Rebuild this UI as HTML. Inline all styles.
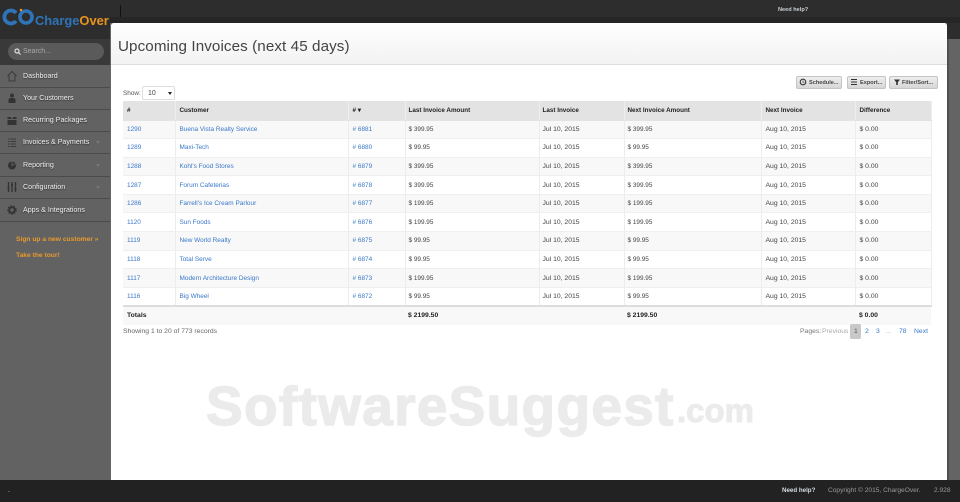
<!DOCTYPE html>
<html><head><meta charset="utf-8"><style>
*{box-sizing:border-box}
html,body{margin:0;padding:0;width:960px;height:502px;overflow:hidden;background:#666;font-family:"Liberation Sans",sans-serif;font-size:6.8px;color:#333}
.a{position:absolute;white-space:nowrap}
#top{left:0;top:0;width:960px;height:18px;background:#2d2d2d}
#side{left:0;top:0;width:110px;height:502px;background:#626262}
#logoband{left:0;top:0;width:110px;height:39px;background:#2d2d2d}
#sband{left:0;top:39px;width:110px;height:26px;background:#393939}
#search{left:8px;top:43px;width:96px;height:17px;border-radius:9px;background:#5a5a5a;color:#aaa;padding:5px 0 0 15px;font-size:7px}
.m{left:0;width:110px;height:23px;border-bottom:1px solid #4b4b4b;color:#eee;font-size:7.1px;padding:7px 0 0 23px;text-shadow:0 1px 1px #333}
.ic{position:absolute;left:7px;top:5px}
.car{position:absolute;left:96px;top:10px;border:2px solid transparent;border-top:3px solid #777}
.or{left:16px;color:#e89a2c;font-size:6.7px;font-weight:bold}
#modal{left:111px;top:23px;width:836px;height:457px;background:#fff;border-radius:3px 3px 0 0}
#mh{left:111px;top:23px;width:836px;height:42px;background:linear-gradient(#fff,#f2f2f2);border-bottom:1px solid #ddd;border-radius:3px 3px 0 0}
#title{left:118px;top:38px;font-size:15.2px;color:#444;line-height:18px;letter-spacing:.09px}
#rs{left:947px;top:39px;width:13px;height:441px;background:#646464;border-left:2px solid #505050}
.btn{top:76px;height:13px;background:linear-gradient(#eee,#d6d6d6);border:1px solid #c4c4c4;border-radius:2px;color:#444;font-size:5.6px;line-height:12px;font-weight:bold;padding-left:12px}
table{position:absolute;left:123px;top:101px;width:808px;border-collapse:collapse;table-layout:fixed}
td,th{padding:0 0 0 4px;height:18.6px;text-align:left;font-size:6.8px;white-space:nowrap;border-right:1px solid #ececec;border-bottom:1px solid #efefef;overflow:hidden;color:#444}
th{background:#e3e3e3;color:#222;height:19px;border-color:#e3e3e3;border-right-color:#eee;font-size:6.3px}
td:nth-child(4),td:nth-child(5),td:nth-child(6),th:nth-child(4),th:nth-child(5),th:nth-child(6){padding-left:3px}
td:nth-child(4),td:nth-child(6){font-size:6.4px}
tr:nth-child(even) td{background:#f8f8f8}
td.l{color:#3a78c8;font-size:6.45px}
tr.t td{background:#f8f8f8!important;border-top:2px solid #ddd;border-right:0;border-bottom:0;font-weight:bold;color:#222;height:18.6px;font-size:6.8px;padding-left:4px}
tr.t td.p{padding-left:3px}
.pg{top:328px;font-size:6.8px;color:#3a78c8}
#foot{left:0;top:480px;width:960px;height:22px;background:#222;color:#999;font-size:6.6px}
.wm{font-weight:bold;color:#ebebeb;-webkit-text-stroke:1.4px #ebebeb}
</style></head><body>
<div class="a" id="side"></div>
<div class="a" id="top"></div>
<div class="a" id="logoband"></div>
<div class="a" id="sband"></div>
<div class="a" style="left:120px;top:5px;width:1px;height:12px;background:#111"></div>
<div class="a" style="left:110px;top:17px;width:850px;height:6px;background:#262626"></div>
<div class="a" style="left:947px;top:23px;width:13px;height:16px;background:#2d2d2d"></div>
<svg class="a" style="left:2px;top:8px" width="34" height="18" viewBox="0 0 34 18"><path d="M14 5A6.500 6.500 0 1 0 14 13" fill="none" stroke="#2f74b8" stroke-width="3.800"/><circle cx="24" cy="9" r="6" fill="none" stroke="#2f74b8" stroke-width="3.600"/><circle cx="19" cy="2" r="1.300" fill="#e8951f"/></svg>
<div class="a" style="left:35px;top:14px;font-weight:bold;font-size:12.9px;line-height:14px;color:#2f74b8">Charge<span style="color:#e8951f">Over</span></div>
<div class="a" style="left:778px;top:7px;font-size:5.600px;font-weight:bold;color:#c8d0d4">Need help?</div>
<div class="a" id="search">Search...</div>
<svg class="a" style="left:14px;top:48px" width="7" height="7" viewBox="0 0 7 7"><circle cx="3" cy="3" r="2" fill="none" stroke="#ddd" stroke-width="1.200"/><path d="M4.500 4.500L6.500 6.500" stroke="#ddd" stroke-width="1.200"/></svg>

<div class="a m" style="top:65px">Dashboard<svg class="ic" width="10" height="12" viewBox="0 0 10 12"><path d="M.5 6L5 1.500 9.500 6M2 5.500V11H8V5.500" fill="none" stroke="#3a3a3a"/></svg></div>
<div class="a m" style="top:87px">Your Customers<svg class="ic" width="10" height="12" viewBox="0 0 10 12"><circle cx="5" cy="3.500" r="2" fill="#333"/><path d="M1.500 11V8q0-2 2-2h3q2 0 2 2v3z" fill="#333"/></svg></div>
<div class="a m" style="top:109px">Recurring Packages<svg class="ic" width="10" height="12" viewBox="0 0 10 12"><path d="M.5 3H4V4.500H6V3H9.500V5H.5zM.5 6H9.500V11H.5z" fill="#333"/></svg></div>
<div class="a m" style="top:131px">Invoices &amp; Payments<svg class="ic" width="10" height="12" viewBox="0 0 10 12"><path d="M1 3H2.500M3.500 3H9M1 5.500H2.500M3.500 5.500H9M1 8H2.500M3.500 8H9M1 10.500H2.500M3.500 10.500H9" stroke="#3a3a3a" fill="none"/></svg><i class="car"></i></div>
<div class="a m" style="top:154px">Reporting<svg class="ic" width="10" height="12" viewBox="0 0 10 12"><circle cx="5" cy="6.500" r="4" fill="#333"/><path d="M5 2.500V6.500L8.500 4.500" stroke="#5f5f5f" fill="none"/></svg><i class="car"></i></div>
<div class="a m" style="top:176px">Configuration<svg class="ic" width="10" height="12" viewBox="0 0 10 12"><path d="M1.500 1V11M5 1V11M8.500 1V11" stroke="#333" stroke-width="1.300"/><path d="M.5 7H2.500M4 4H6M7.500 8H9.500" stroke="#333" stroke-width="1.500"/></svg><i class="car"></i></div>
<div class="a m" style="top:199px">Apps &amp; Integrations<svg class="ic" width="10" height="12" viewBox="0 0 10 12"><circle cx="5" cy="6" r="2.800" fill="none" stroke="#333" stroke-width="2"/><circle cx="5" cy="6" r="4.200" fill="none" stroke="#333" stroke-width="1.200" stroke-dasharray="1.500 1.500"/></svg></div>
<div class="a or" style="top:236px">Sign up a new customer »</div>
<div class="a or" style="top:252px">Take the tour!</div>

<div class="a" id="rs"></div>
<div class="a" id="modal"></div>
<div class="a" id="mh"></div>
<div class="a" id="title">Upcoming Invoices (next 45 days)</div>
<div class="a wm" style="left:206px;top:376px;font-size:55px;line-height:60px;letter-spacing:1.300px">SoftwareSuggest</div>
<div class="a wm" style="left:677px;top:391px;font-size:33px;line-height:40px;-webkit-text-stroke-width:1px">.com</div>

<div class="a btn" style="left:796px;width:46px">Schedule...</div>
<div class="a btn" style="left:847px;width:39px">Export...</div>
<div class="a btn" style="left:889px;width:49px">Filter/Sort...</div>
<svg class="a" style="left:799px;top:78px" width="8" height="8" viewBox="0 0 8 8"><circle cx="4" cy="4" r="2.800" fill="none" stroke="#333" stroke-width="1.100"/><path d="M4 2.500V4.300H5.300" stroke="#333" fill="none" stroke-width=".7"/></svg>
<svg class="a" style="left:850px;top:78px" width="8" height="8" viewBox="0 0 8 8"><path d="M1 1.500H7M1 4H7M1 6.500H7" stroke="#333"/></svg>
<svg class="a" style="left:893px;top:78px" width="8" height="8" viewBox="0 0 8 8"><path d="M1 1.500H7L4.800 4.200V7H3.200V4.200z" fill="#333"/></svg>

<div class="a" style="left:123px;top:90px;color:#555;font-size:6.4px">Show:</div>
<div class="a" style="left:142px;top:86px;width:33px;height:14px;border:1px solid #ddd;border-radius:2px;background:#fff;padding:2.500px 0 0 5px;font-size:7px;color:#444">10<i style="position:absolute;left:25px;top:5px;border:2px solid transparent;border-top:3px solid #222"></i></div>

<table>
<colgroup><col style="width:52px"><col style="width:173px"><col style="width:57px"><col style="width:134px"><col style="width:85px"><col style="width:137px"><col style="width:94px"><col style="width:76px"></colgroup>
<tr><th>#</th><th>Customer</th><th># ▾</th><th>Last Invoice Amount</th><th>Last Invoice</th><th>Next Invoice Amount</th><th>Next Invoice</th><th>Difference</th></tr>
<tr><td class="l">1290</td><td class="l">Buena Vista Realty Service</td><td class="l"># 6881</td><td>$ 399.95</td><td>Jul 10, 2015</td><td>$ 399.95</td><td>Aug 10, 2015</td><td>$ 0.00</td></tr>
<tr><td class="l">1289</td><td class="l">Maxi-Tech</td><td class="l"># 6880</td><td>$ 99.95</td><td>Jul 10, 2015</td><td>$ 99.95</td><td>Aug 10, 2015</td><td>$ 0.00</td></tr>
<tr><td class="l">1288</td><td class="l">Kohl's Food Stores</td><td class="l"># 6879</td><td>$ 399.95</td><td>Jul 10, 2015</td><td>$ 399.95</td><td>Aug 10, 2015</td><td>$ 0.00</td></tr>
<tr><td class="l">1287</td><td class="l">Forum Cafeterias</td><td class="l"># 6878</td><td>$ 399.95</td><td>Jul 10, 2015</td><td>$ 399.95</td><td>Aug 10, 2015</td><td>$ 0.00</td></tr>
<tr><td class="l">1286</td><td class="l">Farrell's Ice Cream Parlour</td><td class="l"># 6877</td><td>$ 199.95</td><td>Jul 10, 2015</td><td>$ 199.95</td><td>Aug 10, 2015</td><td>$ 0.00</td></tr>
<tr><td class="l">1120</td><td class="l">Sun Foods</td><td class="l"># 6876</td><td>$ 199.95</td><td>Jul 10, 2015</td><td>$ 199.95</td><td>Aug 10, 2015</td><td>$ 0.00</td></tr>
<tr><td class="l">1119</td><td class="l">New World Realty</td><td class="l"># 6875</td><td>$ 99.95</td><td>Jul 10, 2015</td><td>$ 99.95</td><td>Aug 10, 2015</td><td>$ 0.00</td></tr>
<tr><td class="l">1118</td><td class="l">Total Serve</td><td class="l"># 6874</td><td>$ 99.95</td><td>Jul 10, 2015</td><td>$ 99.95</td><td>Aug 10, 2015</td><td>$ 0.00</td></tr>
<tr><td class="l">1117</td><td class="l">Modern Architecture Design</td><td class="l"># 6873</td><td>$ 199.95</td><td>Jul 10, 2015</td><td>$ 199.95</td><td>Aug 10, 2015</td><td>$ 0.00</td></tr>
<tr><td class="l">1116</td><td class="l">Big Wheel</td><td class="l"># 6872</td><td>$ 99.95</td><td>Jul 10, 2015</td><td>$ 99.95</td><td>Aug 10, 2015</td><td>$ 0.00</td></tr>
<tr class="t"><td colspan="3">Totals</td><td class="p">$ 2199.50</td><td></td><td class="p">$ 2199.50</td><td></td><td>$ 0.00</td></tr>
</table>

<div class="a" style="left:123px;top:328px;color:#666">Showing 1 to 20 of 773 records</div>
<div class="a pg" style="left:800px;color:#777">Pages:</div>
<div class="a pg" style="left:822px;color:#aaa">Previous</div>
<div class="a" style="left:850px;top:324px;width:11px;height:15px;background:#c8c8c8;border-radius:2px"></div>
<div class="a pg" style="left:854px;color:#555">1</div>
<div class="a pg" style="left:865px">2</div>
<div class="a pg" style="left:876px">3</div>
<div class="a pg" style="left:886px;color:#aaa">...</div>
<div class="a pg" style="left:899px">78</div>
<div class="a pg" style="left:914px">Next</div>

<div class="a" id="foot">
<div class="a" style="left:8px;top:8px">-</div>
<div class="a" style="left:782px;top:7px;font-weight:bold;font-size:6.200px;color:#d4dce0">Need help?</div>
<div class="a" style="left:828px;top:7px">Copyright © 2015, ChargeOver.</div>
<div class="a" style="left:934px;top:7px">2.928</div>
</div>
</body></html>
